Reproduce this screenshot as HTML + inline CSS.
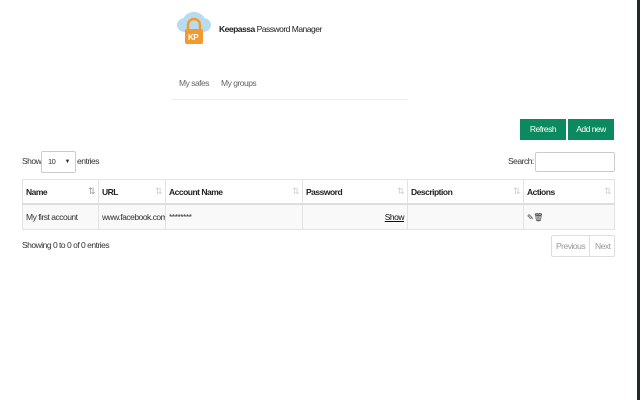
<!DOCTYPE html>
<html><head><style>
body{margin:0;width:640px;height:400px;background:#fff;font-family:"Liberation Sans",sans-serif;font-size:8.5px;color:#333;position:relative;overflow:hidden;letter-spacing:-0.5px}
.a{position:absolute;white-space:nowrap}
.btn{position:absolute;background:#0b8a5f;color:#fff;text-align:center;line-height:21px;height:21px;top:119px}
table{position:absolute;left:22px;top:179px;border-collapse:collapse;width:592px;table-layout:fixed}
td,th{border:1px solid #e3e3e3;padding:0 3px;text-align:left;position:relative;white-space:nowrap;overflow:hidden}
th{height:23px;font-weight:bold;border-bottom:2px solid #ddd;color:#222}
td{height:24px;background:#f9f9f9}
.s{position:absolute;right:3px;top:6px;color:#ccc;font-size:9px;font-weight:normal}
</style></head><body>
<div class="a" style="right:0;top:0;width:3px;height:400px;background:#1e2a2a"></div>
<svg class="a" style="left:176px;top:6px" width="36" height="40" viewBox="0 0 36 40">
<ellipse cx="18" cy="15" rx="11" ry="9" fill="#b7dcef"/><ellipse cx="9" cy="19" rx="8" ry="7" fill="#b7dcef"/><ellipse cx="27" cy="19" rx="8" ry="7" fill="#b7dcef"/>
<path d="M12 24v-5a6 6 0 0 1 12 0v5" fill="none" stroke="#f29a2e" stroke-width="2.5"/>
<rect x="9" y="23" width="18" height="15" rx="2" fill="#f29a2e"/>
<text x="12" y="34" font-size="8" font-weight="bold" fill="#fff" font-family="Liberation Sans">KP</text></svg>
<div class="a" style="left:219px;top:24px;color:#222"><b>Keepassa</b> Password Manager</div>
<div class="a" style="left:179px;top:78px;color:#666">My safes</div>
<div class="a" style="left:221px;top:78px;color:#666">My groups</div>
<div class="a" style="left:172px;top:99px;width:235px;height:1px;background:#eee"></div>
<div class="btn" style="left:520px;width:46px">Refresh</div>
<div class="btn" style="left:568px;width:46px">Add new</div>
<div class="a" style="left:22px;top:156px">Show</div>
<div class="a" style="left:41px;top:151px;width:33px;height:20px;border:1px solid #ccc;border-radius:2px;font-size:7.5px;line-height:20px"><span style="margin-left:6px">10</span><span style="position:absolute;right:5px;font-size:6px">▼</span></div>
<div class="a" style="left:77px;top:156px">entries</div>
<div class="a" style="left:508px;top:156px">Search:</div>
<div class="a" style="left:535px;top:152px;width:78px;height:18px;border:1px solid #ccc;border-radius:2px"></div>
<table>
<colgroup><col style="width:76px"><col style="width:67px"><col style="width:137px"><col style="width:105px"><col style="width:116px"><col style="width:91px"></colgroup>
<tr><th>Name<span class="s" style="color:#999">⇅</span></th><th>URL<span class="s">⇅</span></th><th>Account Name<span class="s">⇅</span></th><th>Password<span class="s">⇅</span></th><th>Description<span class="s">⇅</span></th><th>Actions<span class="s">⇅</span></th></tr>
<tr><td>My first account</td><td>www.facebook.com</td><td>********</td><td style="text-align:right;color:#111"><u>Show</u></td><td></td><td style="font-size:8px">✎🗑</td></tr>
</table>
<div class="a" style="left:22px;top:240px">Showing 0 to 0 of 0 entries</div>
<div class="a" style="left:551px;top:235px;width:62px;height:20px;border:1px solid #ddd;border-radius:2px;color:#999;line-height:20px"><span style="position:absolute;left:4px">Previous</span><span style="position:absolute;left:37px;top:0;height:20px;border-left:1px solid #ddd;padding-left:5px">Next</span></div>
</body></html>
